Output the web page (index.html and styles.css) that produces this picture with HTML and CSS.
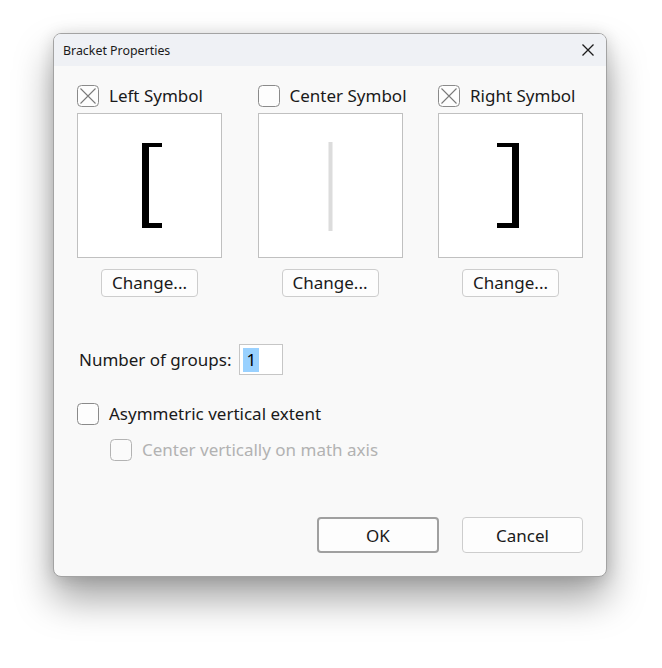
FILE: index.html
```html
<!DOCTYPE html>
<html lang="en">
<head>
<meta charset="utf-8">
<title>Bracket Properties</title>
<link rel="stylesheet" href="styles.css">
</head>
<body>
<div class="dialog">
  <div class="titlebar">
    <span class="title">Bracket Properties</span>
    <span class="close" aria-label="Close">
      <svg width="12" height="12" viewBox="0 0 12 12"><path d="M0.5 0.5 L11.5 11.5 M11.5 0.5 L0.5 11.5" stroke="#1c1c1c" stroke-width="1.3" fill="none"/></svg>
    </span>
  </div>
  <div class="content">
    <div class="symbols">
      <div class="symcol">
        <label class="check">
          <span class="box checked"><svg width="22" height="22" viewBox="0 0 22 22"><rect x="0.5" y="0.5" width="21" height="21" rx="4" fill="#fdfdfd" stroke="#8a8a8a"/><path d="M3.5 3.5 L18.5 18.5 M18.5 3.5 L3.5 18.5" stroke="#7a7a7a" stroke-width="1.1"/></svg></span>
          <span class="lbl">Left Symbol</span>
        </label>
        <div class="preview">
          <svg width="143" height="143" viewBox="0 0 143 143"><path d="M64 29 H84 V33 H71 V109 H84 V114 H64 Z" fill="#000"/></svg>
        </div>
        <button class="btn change">Change...</button>
      </div>
      <div class="symcol">
        <label class="check">
          <span class="box"><svg width="22" height="22" viewBox="0 0 22 22"><rect x="0.5" y="0.5" width="21" height="21" rx="4" fill="#fdfdfd" stroke="#8a8a8a"/></svg></span>
          <span class="lbl">Center Symbol</span>
        </label>
        <div class="preview">
          <svg width="143" height="143" viewBox="0 0 143 143"><rect x="69.5" y="28" width="4" height="89" fill="#dcdcdc"/></svg>
        </div>
        <button class="btn change">Change...</button>
      </div>
      <div class="symcol">
        <label class="check">
          <span class="box checked"><svg width="22" height="22" viewBox="0 0 22 22"><rect x="0.5" y="0.5" width="21" height="21" rx="4" fill="#fdfdfd" stroke="#8a8a8a"/><path d="M3.5 3.5 L18.5 18.5 M18.5 3.5 L3.5 18.5" stroke="#7a7a7a" stroke-width="1.1"/></svg></span>
          <span class="lbl">Right Symbol</span>
        </label>
        <div class="preview">
          <svg width="143" height="143" viewBox="0 0 143 143"><path d="M58 29 H80 V114 H58 V109 H73 V33 H58 Z" fill="#000"/></svg>
        </div>
        <button class="btn change">Change...</button>
      </div>
    </div>

    <div class="groups">
      <span class="lbl">Number of groups:</span>
      <span class="numbox"><span class="sel">1</span></span>
    </div>

    <label class="check opt">
      <span class="box"><svg width="22" height="22" viewBox="0 0 22 22"><rect x="0.5" y="0.5" width="21" height="21" rx="4" fill="#fdfdfd" stroke="#8a8a8a"/></svg></span>
      <span class="lbl">Asymmetric vertical extent</span>
    </label>
    <label class="check opt sub disabled">
      <span class="box"><svg width="22" height="22" viewBox="0 0 22 22"><rect x="0.5" y="0.5" width="21" height="21" rx="4" fill="#fbfbfb" stroke="#b3b3b3"/></svg></span>
      <span class="lbl">Center vertically on math axis</span>
    </label>

    <div class="actions">
      <button class="btn ok">OK</button>
      <button class="btn cancel">Cancel</button>
    </div>
  </div>
</div>
</body>
</html>
```
FILE: styles.css
```css
html, body {
  margin: 0;
  padding: 0;
  background: #ffffff;
}
body {
  box-sizing: border-box;
  min-height: 668px;
  font-family: "Noto Sans", "Open Sans", sans-serif;
  color: #1a1a1a;
  padding-top: 33px;
  padding-left: 53px;
}
.dialog {
  box-sizing: border-box;
  width: 554px;
  height: 544px;
  border: 1px solid #a3a3a3;
  border-radius: 8px;
  background: #f9f9f9;
  box-shadow: 0 22px 38px rgba(0, 0, 0, 0.36), 0 2px 16px rgba(0, 0, 0, 0.14);
  display: flex;
  flex-direction: column;
  overflow: hidden;
}
.titlebar {
  height: 32px;
  background: #eff1f5;
  display: flex;
  align-items: center;
  justify-content: space-between;
  padding: 0 12px 0 9px;
  flex: none;
}
.title {
  font-size: 12.4px;
  color: #1a1a1a;
}
.close {
  display: flex;
  width: 12px;
  height: 12px;
}
.content {
  flex: 1;
  display: flex;
  flex-direction: column;
  padding: 19px 23px 23px 23px;
}
.symbols {
  display: grid;
  grid-template-columns: repeat(3, 145px);
  column-gap: 35.5px;
}
.symcol {
  display: flex;
  flex-direction: column;
}
.check {
  display: flex;
  align-items: center;
  gap: 10px;
  height: 22px;
}
.box {
  display: flex;
  width: 22px;
  height: 22px;
  flex: none;
}
.lbl {
  font-size: 17px;
  line-height: 22px;
  white-space: nowrap;
}
.preview {
  margin-top: 6px;
  box-sizing: border-box;
  width: 145px;
  height: 145px;
  border: 1px solid #c0c0c0;
  background: #ffffff;
  display: flex;
}
.btn {
  font-family: "Noto Sans", "Open Sans", sans-serif;
  font-size: 17px;
  color: #1a1a1a;
  background: #fdfdfd;
  border: 1px solid #cdcdcd;
  border-radius: 4px;
  padding: 0;
  box-sizing: border-box;
}
.change {
  margin-top: 11px;
  width: 97px;
  height: 28px;
  align-self: center;
  line-height: 24px;
}
.groups {
  margin-top: 47px;
  display: flex;
  align-items: center;
  gap: 8px;
  height: 31px;
  padding-left: 2px;
}
.numbox {
  box-sizing: border-box;
  width: 44px;
  height: 31px;
  border: 1px solid #c6c6c6;
  background: #ffffff;
  padding: 3px 0 0 3px;
}
.sel {
  display: block;
  width: 16px;
  height: 24px;
  background: #99d1ff;
  font-size: 17px;
  line-height: 24px;
  text-align: center;
  color: #000;
}
.opt {
  margin-top: 28px;
}
.sub {
  margin-top: 14px;
  margin-left: 33px;
}
.disabled .lbl {
  color: #b2b2b2;
}
.actions {
  margin-top: auto;
  display: flex;
  justify-content: flex-end;
  gap: 23px;
}
.ok {
  width: 122px;
  height: 36px;
  border: 2px solid #a0a0a0;
}
.cancel {
  width: 121px;
  height: 36px;
}
```
